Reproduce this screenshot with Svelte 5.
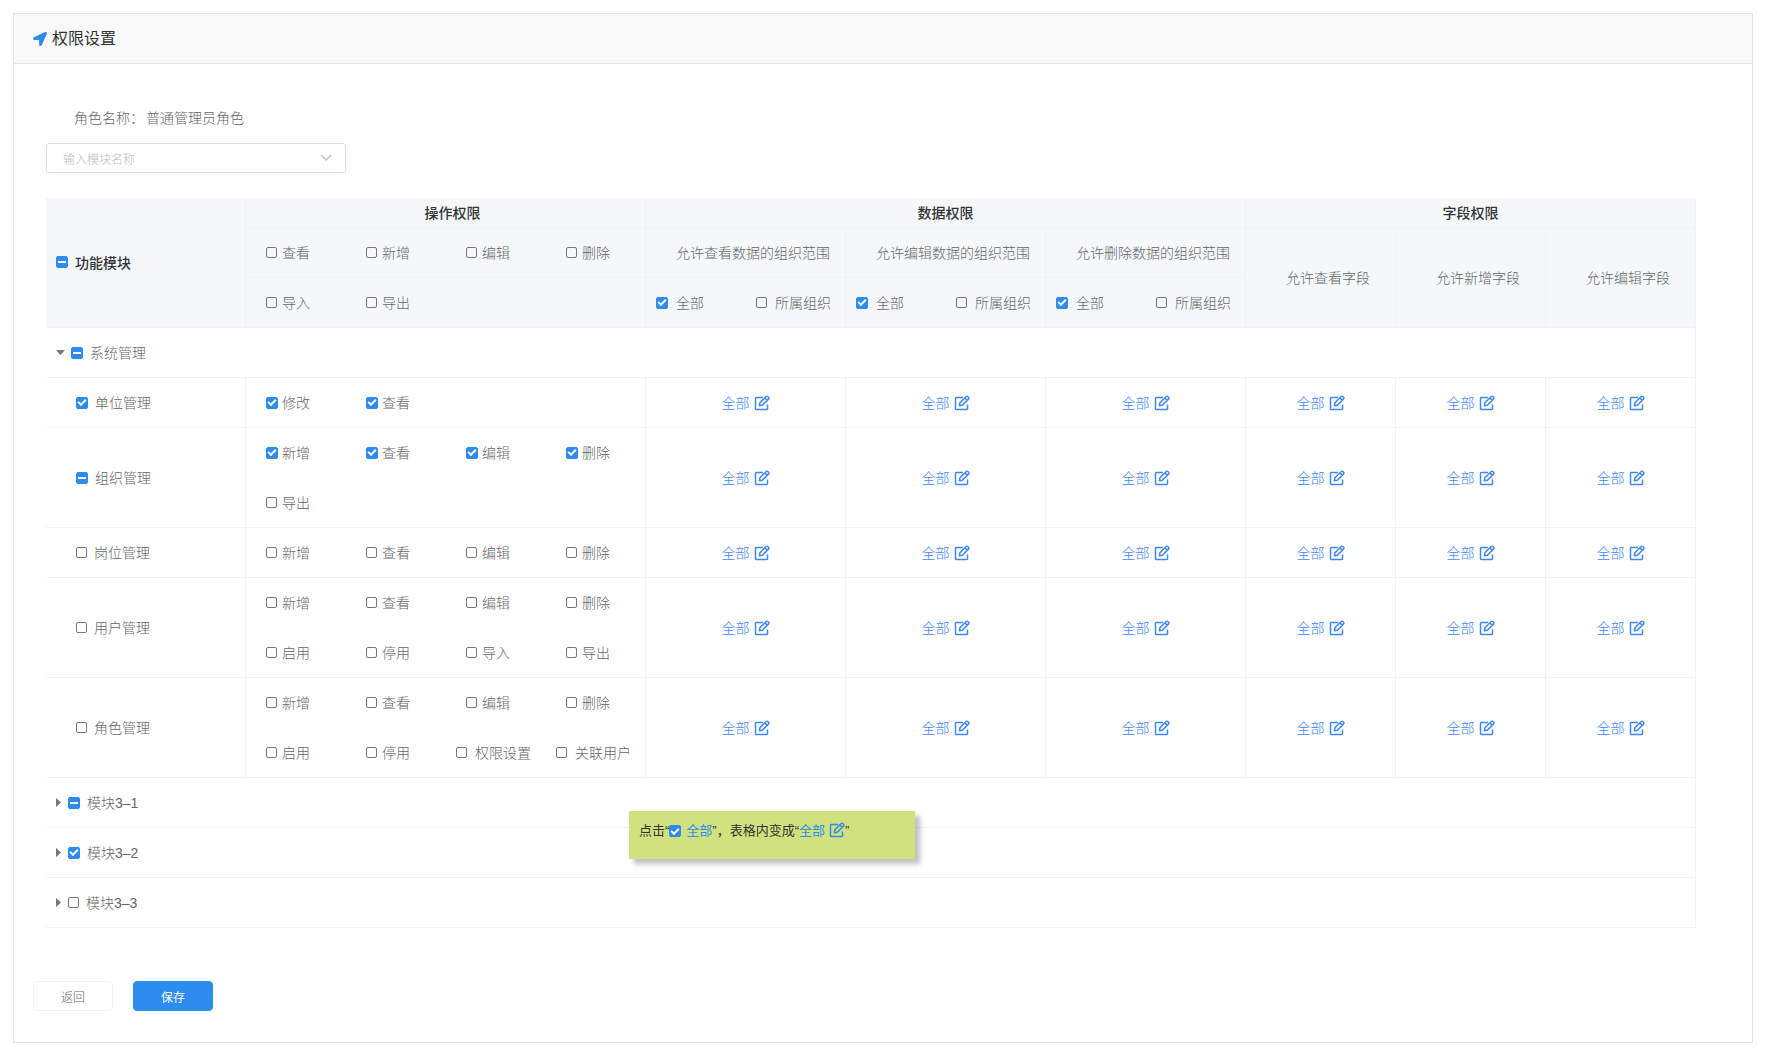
<script>
  const actionHead = [
    [{ name: '查看' }, { name: '新增' }, { name: '编辑' }, { name: '删除' }],
    [{ name: '导入' }, { name: '导出' }],
  ];

  const scopes = ['允许查看数据的组织范围', '允许编辑数据的组织范围', '允许删除数据的组织范围'];
  const fields = ['允许查看字段', '允许新增字段', '允许编辑字段'];

  // state: 'on' | 'part' | 'off'
  const modules = [
    {
      name: '系统管理',
      state: 'part',
      open: true,
      children: [
        { name: '单位管理', state: 'on', actions: '修改+ 查看+' },
        { name: '组织管理', state: 'part', actions: '新增+ 查看+ 编辑+ 删除+ 导出' },
        { name: '岗位管理', state: 'off', actions: '新增 查看 编辑 删除' },
        { name: '用户管理', state: 'off', actions: '新增 查看 编辑 删除 启用 停用 导入 导出' },
        { name: '角色管理', state: 'off', actions: '新增 查看 编辑 删除 启用 停用 权限设置 关联用户' },
      ],
    },
    { name: '模块3–1', state: 'part', open: false, children: [] },
    { name: '模块3–2', state: 'on', open: false, children: [] },
    { name: '模块3–3', state: 'off', open: false, children: [] },
  ];

  function parse(actions) {
    return actions.split(' ').map((a) => ({
      name: a.replace('+', ''),
      on: a.endsWith('+'),
    }));
  }
</script>

{#snippet check(name, state, cls)}
  <label class="check {cls}">
    <input type="checkbox" checked={state === 'on'} indeterminate={state === 'part'} />
    <span>{name}</span>
  </label>
{/snippet}

{#snippet editIcon()}
  <svg class="edit" viewBox="0 0 16 16" aria-hidden="true">
    <path d="M9 2.5H2.2a.7.7 0 0 0-.7.7v10.6c0 .4.3.7.7.7h10.6c.4 0 .7-.3.7-.7V9.5" />
    <path d="M5.4 10.7l.5-3 6.3-6.2a1.1 1.1 0 0 1 1.6 0l.8.8a1.1 1.1 0 0 1 0 1.6l-6.2 6.3zM10.9 2.9l2.3 2.3" />
  </svg>
{/snippet}

<div class="card">
  <header>
    <svg viewBox="0 0 512 512" aria-hidden="true">
      <path d="M444.52 3.52L28.74 195.42c-47.97 22.39-31.98 92.75 19.19 92.75h175.91v175.91c0 51.17 70.36 67.17 92.75 19.19l191.9-415.78c15.99-38.39-25.59-79.97-63.97-63.97z" />
    </svg>
    <h1>权限设置</h1>
  </header>

  <main>
    <p class="role"><span>角色名称：</span><span>普通管理员角色</span></p>

    <div class="select">
      <select aria-label="输入模块名称">
        <option>输入模块名称</option>
        {#each modules as m}
          <option>{m.name}</option>
        {/each}
      </select>
      <svg viewBox="0 0 12 8" aria-hidden="true"><path d="M1 1l5 5 5-5" /></svg>
    </div>

    <div class="grid">
      <table>
        <colgroup>
          <col class="c-name" />
          <col class="c-actions" />
          <col class="c-scope" /><col class="c-scope" /><col class="c-scope" />
          <col class="c-field" /><col class="c-field" /><col class="c-field" />
        </colgroup>
        <thead>
          <tr class="titles">
            <th rowspan="3" class="corner">{@render check('功能模块', 'part', 'loose')}</th>
            <th class="ops">操作权限</th>
            <th colspan="3">数据权限</th>
            <th colspan="3">字段权限</th>
          </tr>
          <tr>
            <td>
              <div class="actions">
                {#each actionHead[0] as a}{@render check(a.name, 'off', 'item')}{/each}
              </div>
            </td>
            {#each scopes as s}
              <td class="scope">{s}</td>
            {/each}
            {#each fields as f}
              <td rowspan="2" class="field">{f}</td>
            {/each}
          </tr>
          <tr>
            <td>
              <div class="actions">
                {#each actionHead[1] as a}{@render check(a.name, 'off', 'item')}{/each}
              </div>
            </td>
            {#each scopes as s}
              <td>
                <div class="pair">
                  {@render check('全部', 'on', 'long')}
                  {@render check('所属组织', 'off', 'long')}
                </div>
              </td>
            {/each}
          </tr>
        </thead>
        <tbody>
          {#each modules as m}
            <tr>
              <td colspan="8">
                <div class="group">
                  <button class="toggle" class:open={m.open} aria-label="展开{m.name}" aria-expanded={m.open}></button>
                  {@render check(m.name, m.state, 'loose')}
                </div>
              </td>
            </tr>
            {#each m.children as row}
              <tr>
                <td class="child">{@render check(row.name, row.state, 'loose')}</td>
                <td>
                  <div class="actions">
                    {#each parse(row.actions) as a}
                      {@render check(a.name, a.on ? 'on' : 'off', a.name.length > 2 ? 'long' : 'item')}
                    {/each}
                  </div>
                </td>
                {#each [...scopes, ...fields] as s}
                  <td class="center"><a href="#edit" aria-label="{row.name} {s}">全部{@render editIcon()}</a></td>
                {/each}
              </tr>
            {/each}
          {/each}
        </tbody>
      </table>

      <div class="note">
        点击“<label><input type="checkbox" checked /><span>全部</span></label>”，表格内变成“<a href="#edit">全部{@render editIcon()}</a>”
      </div>
    </div>
  </main>

  <footer>
    <button class="btn">返回</button>
    <button class="btn primary">保存</button>
  </footer>
</div>

<style>
  :global(body) {
    background: #fff;
    font-family: "Liberation Sans", "Noto Sans CJK SC", sans-serif;
    font-size: 14px;
    font-weight: 300;
    line-height: 20px;
    color: #666;
  }
  .card {
    margin: 13px 36px 8px 13px;
    border: 1px solid #e4e4e4;
  }
  header {
    display: flex;
    align-items: center;
    gap: 5px;
    height: 49px;
    padding-left: 19px;
    background: #f9f9f9;
    border-bottom: 1px solid #e4e4e4;
  }
  header svg {
    width: 14px;
    height: 14px;
    fill: #2d8cf0;
  }
  h1 {
    margin: 0;
    font-size: 16px;
    font-weight: 400;
    line-height: 24px;
    color: #333;
  }
  main {
    padding: 44px 56px 0 32px;
  }
  .role {
    display: flex;
    gap: 2px;
    margin: 0 0 15px;
    padding-left: 28px;
  }
  .select {
    position: relative;
    width: 300px;
    margin-bottom: 25px;
  }
  select, .btn {
    height: 30px;
    background: #fff;
    font-family: "Noto Sans CJK SC", sans-serif;
    font-size: 12px;
    font-weight: 300;
  }
  select {
    display: block;
    width: 100%;
    padding: 0 40px 0 16px;
    border: 1px solid #dcdee2;
    border-radius: 3px;
    appearance: none;
    color: #bbb;
  }
  .select svg {
    position: absolute;
    right: 14px;
    top: 11px;
    width: 12px;
    height: 8px;
    fill: none;
    stroke: #c0c4cc;
    stroke-width: 1.5;
  }
  .grid {
    position: relative;
  }
  table {
    width: 100%;
    table-layout: fixed;
    border-spacing: 0;
  }
  .c-name, .c-scope {
    width: 200px;
  }
  .c-actions {
    width: 400px;
  }
  .c-field {
    width: 150px;
  }
  th, td {
    box-sizing: border-box;
    height: 50px;
    padding: 0;
    border-right: 1px solid #f2f2f2;
    border-bottom: 1px solid #f2f2f2;
    text-align: left;
  }
  thead {
    background: #f4f8fb;
  }
  th {
    font-family: "Noto Sans CJK SC", sans-serif;
    font-weight: 500;
    line-height: 18px;
    color: #333;
  }
  .titles th {
    height: 30px;
    padding-bottom: 2px;
    text-align: center;
  }
  .titles .corner {
    padding-left: 10px;
  }
  .titles .ops {
    padding-left: 14px;
  }
  .scope {
    padding-left: 30px;
  }
  .field {
    padding-left: 40px;
  }
  .child {
    padding-left: 30px;
  }
  .center {
    text-align: center;
  }
  .actions {
    display: grid;
    grid-template-columns: repeat(4, 100px);
    grid-auto-rows: 49px;
    row-gap: 1px;
  }
  .pair {
    display: grid;
    grid-template-columns: repeat(2, 100px);
  }
  .group {
    display: flex;
    align-items: center;
    padding-left: 10px;
  }
  .toggle {
    width: 12px;
    height: 16px;
    padding: 0;
    border: 0;
    background: none;
  }
  .toggle::before {
    content: "";
    display: block;
    width: 5px;
    height: 9px;
    background: #777;
    clip-path: polygon(0 0, 100% 50%, 0 100%);
  }
  .toggle.open {
    width: 15px;
  }
  .toggle.open::before {
    width: 9px;
    height: 5px;
    clip-path: polygon(0 0, 100% 0, 50% 100%);
  }
  .check {
    display: flex;
    align-items: center;
    gap: 8px;
    white-space: nowrap;
  }
  .loose {
    gap: 7px;
  }
  .item {
    display: grid;
    grid-template-columns: 12px auto;
    justify-content: start;
    gap: 4px;
    padding-left: 20px;
  }
  .long {
    padding-left: 10px;
  }
  input {
    display: inline-grid;
    place-items: center;
    flex: none;
    box-sizing: border-box;
    width: 11px;
    height: 11px;
    margin: 0;
    border: 1px solid #777;
    border-radius: 2px;
    appearance: none;
  }
  input:checked, input:indeterminate {
    width: 12px;
    height: 12px;
    border-color: #2d8cf0;
    background: #2d8cf0;
  }
  input:checked::after {
    content: "";
    width: 6px;
    height: 3px;
    margin-bottom: 2px;
    border: solid #fff;
    border-width: 0 0 2px 2px;
    rotate: -45deg;
  }
  input:indeterminate::after {
    content: "";
    width: 8px;
    height: 2px;
    background: #fff;
  }
  a {
    color: #3d87f7;
    text-decoration: none;
  }
  .edit {
    width: 16px;
    height: 16px;
    margin-left: 4px;
    vertical-align: -3px;
    fill: none;
    stroke: currentColor;
    stroke-width: 1.5;
    stroke-linejoin: round;
  }
  .note {
    position: absolute;
    left: 583px;
    top: 613px;
    box-sizing: border-box;
    width: 286px;
    height: 48px;
    padding: 10px;
    background: #d0e17d;
    box-shadow: 5px 5px 5px rgba(0, 0, 0, 0.25);
    font-size: 13px;
    font-weight: 400;
    color: #333;
    white-space: nowrap;
  }
  .note label {
    display: inline-flex;
    align-items: center;
    gap: 5px;
    vertical-align: top;
  }
  .note label, .note a {
    color: #2d8cf0;
  }
  footer {
    display: flex;
    gap: 20px;
    padding: 53px 19px 31px;
  }
  .btn {
    width: 80px;
    padding: 0;
    border: 1px solid #f2f2f2;
    border-radius: 4px;
    color: #666;
  }
  .primary {
    border-color: #2d8cf0;
    background: #2d8cf0;
    font-weight: 400;
    color: #fff;
  }
</style>
